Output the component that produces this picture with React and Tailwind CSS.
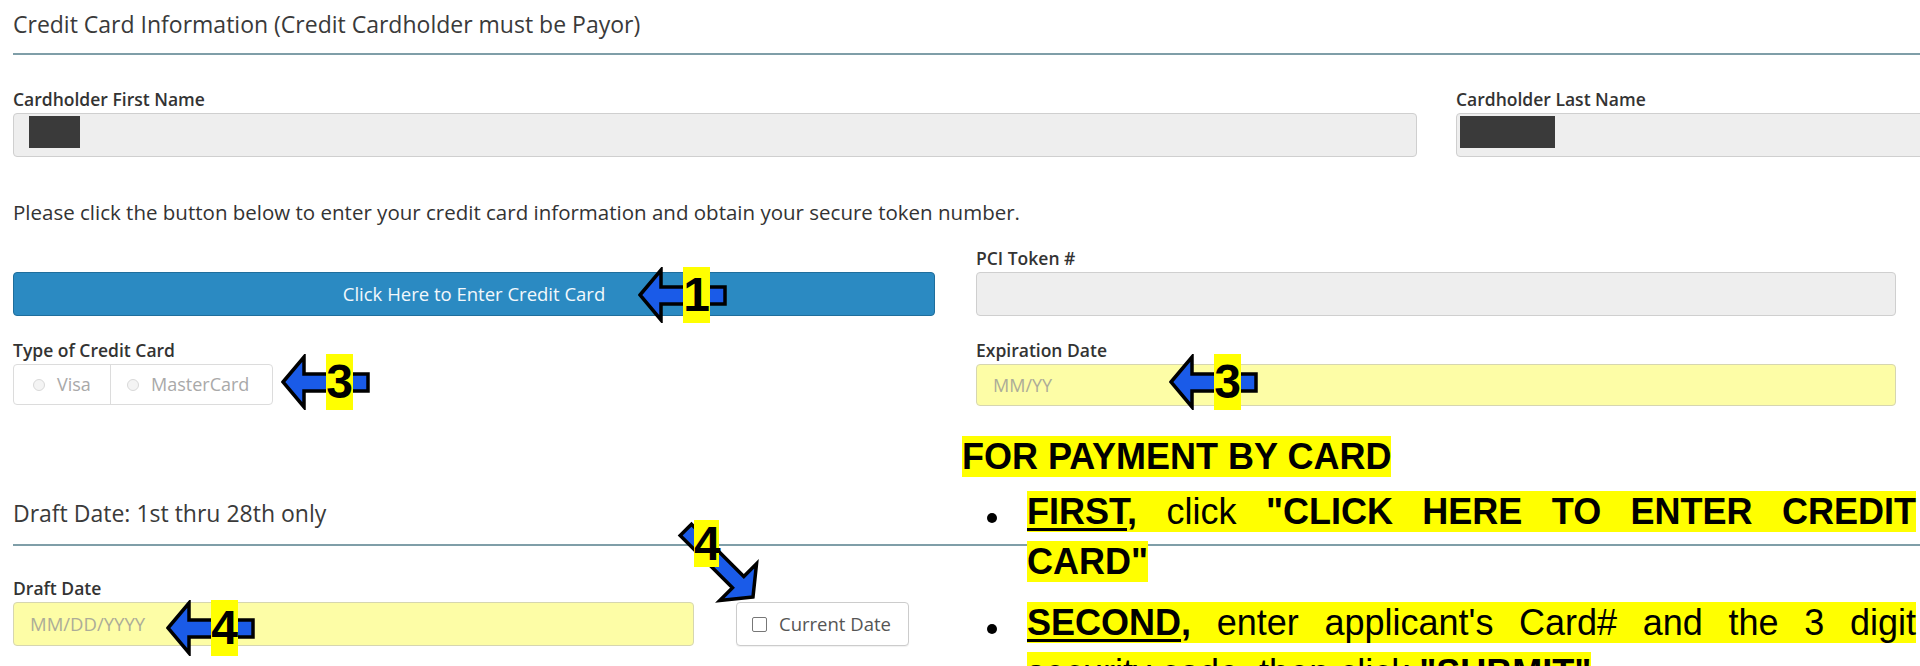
import React from 'react'

// Overlay arrow pointing left, with yellow number tag on the shaft
function Arrow({ className, digit }) {
  return (
    <div className={`absolute h-[56px] w-[90px] ${className}`}>
      <svg width="90" height="56" viewBox="0 0 90 56" className="absolute left-0 top-0">
        <path
          d="M2 28 L23 3 L23 20 L87 20 L87 37 L23 37 L23 53 Z"
          fill="#1a5be8"
          stroke="#000"
          strokeWidth="3.5"
        />
      </svg>
      <span className="absolute left-[45px] top-0 h-[56px] w-[27px] bg-[#ffff00] text-center font-['Liberation_Sans',Arial,sans-serif] text-[48px] font-bold leading-[56px] text-black">
        {digit}
      </span>
    </div>
  )
}

function Label({ children }) {
  return <div className="mb-[4px] text-[17.5px] font-semibold leading-[20px] text-[#333]">{children}</div>
}

function NameField({ label, width, redact, redactOffset }) {
  return (
    <div className={`shrink-0 ${width}`}>
      <Label>{label}</Label>
      <div className="h-[44px] rounded-[4px] border border-[#cfcfcf] bg-[#eeeeee] pt-[2px]">
        <div className={`h-[32px] bg-[#3a3a3a] ${redact} ${redactOffset}`} />
      </div>
    </div>
  )
}

function Bullet() {
  return (
    <span className="w-[65px] shrink-0 pl-[25px] pt-[26px]">
      <span className="block h-[10px] w-[10px] rounded-full bg-black" />
    </span>
  )
}

export default function App() {
  return (
    <div className="relative h-[666px] w-[1920px] overflow-hidden bg-white font-['Open_Sans',sans-serif] text-[#333]">
      <div className="pl-[13px]">
        <h3 className="mt-[9px] text-[23px] leading-[30px] text-[#3a3a3a]">
          Credit Card Information (Credit Cardholder must be Payor)
        </h3>
        <div className="mt-[14px] h-[2px] bg-[#7f9ea8]" />

        <div className="mt-[34px] flex">
          <NameField label="Cardholder First Name" width="w-[1404px]" redact="w-[51px]" redactOffset="ml-[15px]" />
          <div className="ml-[39px] shrink-0">
            <NameField label="Cardholder Last Name" width="w-[480px]" redact="w-[95px]" redactOffset="ml-[3px]" />
          </div>
        </div>

        <p className="mt-[43px] text-[20.5px] leading-[25px] text-[#333]">
          Please click the button below to enter your credit card information and obtain your secure token number.
        </p>

        <div className="mt-[23px] flex">
          <div className="w-[922px] shrink-0 pt-[24px]">
            <button className="flex h-[44px] w-full items-center justify-center rounded-[4px] border border-[#1f6e9c] bg-[#2b8ac2] text-[18.5px] text-[#f2f8fc]">
              Click Here to Enter Credit Card
            </button>
          </div>
          <div className="ml-[41px] w-[920px] shrink-0">
            <Label>PCI Token #</Label>
            <div className="h-[44px] rounded-[4px] border border-[#cfcfcf] bg-[#eeeeee]" />
          </div>
        </div>

        <div className="mt-[24px] flex">
          <div className="w-[922px] shrink-0">
            <Label>Type of Credit Card</Label>
            <div className="flex h-[41px] w-[260px] rounded-[4px] border border-[#dcdcdc] text-[18px] text-[#a9a9a9]">
              <div className="flex w-[97px] items-center gap-[12px] border-r border-[#dcdcdc] pl-[19px]">
                <span className="h-[12px] w-[12px] rounded-full border border-[#d8d8d8] bg-[#f4f4f4]" />
                Visa
              </div>
              <div className="flex items-center gap-[12px] pl-[16px]">
                <span className="h-[12px] w-[12px] rounded-full border border-[#d8d8d8] bg-[#f4f4f4]" />
                MasterCard
              </div>
            </div>
          </div>
          <div className="ml-[41px] w-[920px] shrink-0">
            <Label>Expiration Date</Label>
            <div className="flex h-[42px] items-center rounded-[4px] border border-[#d6d6b0] bg-[#fdfda6] px-[16px] text-[18px] text-[#acac98]">
              MM/YY
            </div>
          </div>
        </div>

        <h3 className="mt-[92px] text-[23px] leading-[30px] text-[#3a3a3a]">Draft Date: 1st thru 28th only</h3>
        <div className="mt-[16px] h-[2px] bg-[#7f9ea8]" />

        <div className="mt-[32px] flex items-end">
          <div className="w-[681px] shrink-0">
            <Label>Draft Date</Label>
            <div className="flex h-[44px] items-center rounded-[4px] border border-[#d6d6b0] bg-[#fdfda6] px-[16px] text-[18.5px] text-[#acac98]">
              MM/DD/YYYY
            </div>
          </div>
          <div className="ml-[42px] flex h-[44px] w-[173px] shrink-0 items-center gap-[12px] rounded-[4px] border border-[#cccccc] bg-white pl-[15px] text-[18.5px] text-[#555] shadow-[0_1px_1px_rgba(0,0,0,0.06)]">
            <span className="h-[15px] w-[15px] rounded-[2px] border-[1.5px] border-[#777]" />
            Current Date
          </div>
        </div>
      </div>

      {/* pasted annotation: instructions */}
      <div className="absolute left-[962px] top-[432px] w-[954px] font-['Liberation_Sans',Arial,sans-serif] text-[36px] leading-[50px] text-black">
        <div>
          <span className="bg-[#ffff00] font-bold">FOR PAYMENT BY CARD</span>
        </div>
        <ul className="mt-[5px]">
          <li className="flex">
            <Bullet />
            <div className="w-[889px]">
              <div className="text-justify [text-align-last:justify]">
                <span className="bg-[#ffff00]">
                  <b className="underline decoration-[3px] underline-offset-[4px]">FIRST</b>
                  <b>,</b> click <b>"CLICK HERE TO ENTER CREDIT</b>
                </span>
              </div>
              <div>
                <span className="bg-[#ffff00] font-bold">CARD"</span>
              </div>
            </div>
          </li>
          <li className="mt-[11px] flex">
            <Bullet />
            <div className="w-[889px]">
              <div className="text-justify [text-align-last:justify]">
                <span className="bg-[#ffff00]">
                  <b className="underline decoration-[3px] underline-offset-[4px]">SECOND</b>
                  <b>,</b> enter applicant's Card# and the 3 digit
                </span>
              </div>
              <div>
                <span className="bg-[#ffff00]">
                  security code, then click <b>"SUBMIT"</b>
                </span>
              </div>
            </div>
          </li>
        </ul>
      </div>

      {/* pasted annotation: arrows */}
      <Arrow className="left-[638px] top-[267px]" digit="1" />
      <Arrow className="left-[281px] top-[354px]" digit="3" />
      <Arrow className="left-[1169px] top-[354px]" digit="3" />
      <Arrow className="left-[166px] top-[600px]" digit="4" />

      <div className="absolute left-[670px] top-[505px] h-[100px] w-[100px]">
        <svg width="100" height="100" viewBox="0 0 100 100" className="absolute left-0 top-0">
          <g transform="translate(83 92) rotate(225)">
            <path
              d="M0 0 L21 -26 L21 -8 L95 -8 L95 8 L21 8 L21 26 Z"
              fill="#1a5be8"
              stroke="#000"
              strokeWidth="3.5"
            />
          </g>
        </svg>
        <span className="absolute left-[24px] top-[15px] h-[47px] w-[25px] bg-[#ffff00] text-center font-['Liberation_Sans',Arial,sans-serif] text-[48px] font-bold leading-[47px] text-black">
          4
        </span>
      </div>
    </div>
  )
}
